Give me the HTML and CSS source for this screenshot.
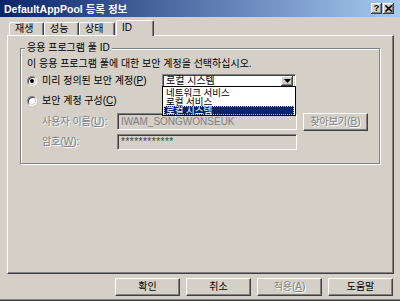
FILE: index.html
```html
<!DOCTYPE html>
<html lang="ko">
<head>
  <meta charset="UTF-8">
  <title>DefaultAppPool 등록 정보</title>
  <link rel="stylesheet" href="styles.css">
</head>
<body>
  <div class="window">
    <div class="titlebar">
      <span class="title">DefaultAppPool 등록 정보</span>
      <div class="title-buttons">
        <span class="tbtn help">?</span>
        <span class="tbtn">
          <svg width="8" height="7" viewBox="0 0 8 7"><path d="M0.5 0.5 L7 6.5 M7 0.5 L0.5 6.5" stroke="#000" stroke-width="1.6"/></svg>
        </span>
      </div>
    </div>

    <div class="tabs">
      <div class="tab">재생</div>
      <div class="tab">성능</div>
      <div class="tab wide">상태</div>
      <div class="tab active">ID</div>
    </div>

    <div class="panel">
      <div class="group">
        <span class="legend">응용 프로그램 풀 ID</span>
        <p class="hint">이 응용 프로그램 풀에 대한 보안 계정을 선택하십시오.</p>

        <div class="row row-first">
          <label class="radio-label">
            <span class="radio checked"></span>
            <span>미리 정의된 보안 계정(<u>P</u>)</span>
          </label>
          <div class="combo">
            <span>로컬 시스템</span>
            <span class="combo-arrow">
              <svg width="7" height="4" viewBox="0 0 7 4"><path d="M0 0 H7 L3.5 4 Z" fill="#000"/></svg>
            </span>
            <ul class="dropdown">
              <li>네트워크 서비스</li>
              <li>로컬 서비스</li>
              <li class="selected">로컬 시스템</li>
            </ul>
          </div>
        </div>

        <div class="row row-second">
          <label class="radio-label">
            <span class="radio"></span>
            <span>보안 계정 구성(<u>C</u>)</span>
          </label>
        </div>

        <div class="row field-row user-row">
          <span class="field-label disabled">사용자 이름(<u>U</u>):</span>
          <div class="textbox disabled-box">IWAM_SONGWONSEUK</div>
          <span class="btn browse disabled">찾아보기(<u>B</u>)</span>
        </div>

        <div class="row field-row pass-row">
          <span class="field-label disabled">암호(<u>W</u>):</span>
          <div class="textbox password">************</div>
        </div>
      </div>
    </div>

    <div class="buttons">
      <span class="btn">확인</span>
      <span class="btn">취소</span>
      <span class="btn disabled">적용(<u>A</u>)</span>
      <span class="btn">도움말</span>
    </div>
  </div>
</body>
</html>
```

FILE: styles.css
```css
* {
  box-sizing: border-box;
}
body {
  margin: 0;
  font-family: "Liberation Sans", "Noto Sans CJK KR", sans-serif;
  font-size: 10px;
  color: #000;
  background: #d4d0c8;
}
.window {
  width: 400px;
  height: 301px;
  background: #d4d0c8;
  border-bottom: 1px solid #404040;
  box-shadow: inset 0 -1px #808080;
  display: flex;
  flex-direction: column;
}
.titlebar {
  height: 17px;
  background: linear-gradient(to right, #0a246a, #a6caf0);
  display: flex;
  align-items: center;
  justify-content: space-between;
  padding: 0 6px 0 4px;
}
.title {
  color: #fff;
  font-weight: bold;
  font-size: 10.5px;
  line-height: 12px;
}
.title-buttons {
  display: flex;
  gap: 1px;
}
.tbtn {
  width: 11px;
  height: 11px;
  background: #d4d0c8;
  box-shadow: inset -1px -1px #404040, inset 1px 1px #fff, inset -2px -2px #808080;
  display: flex;
  align-items: center;
  justify-content: center;
}
.tbtn.help {
  font-weight: bold;
  font-size: 9px;
  line-height: 9px;
}
.tabs {
  margin-top: 3px;
  height: 15px;
  padding-left: 9px;
  display: flex;
  align-items: flex-end;
}
.tab {
  width: 35px;
  height: 13px;
  padding-left: 5px;
  line-height: 11px;
  border: 1px solid;
  border-color: #fff #404040 transparent #fff;
  border-bottom: none;
  border-radius: 2px 2px 0 0;
  box-shadow: inset -1px 0 #808080;
  background: #d4d0c8;
}
.tab.wide {
  width: 36px;
}
.tab.active {
  width: 38px;
  height: 16px;
  margin-left: 1px;
  margin-bottom: -1px;
  line-height: 13px;
  position: relative;
  z-index: 1;
}
.panel {
  margin-left: 7px;
  width: 387px;
  height: 239px;
  border: 1px solid;
  border-color: #fff #404040 #404040 #fff;
  box-shadow: inset -1px -1px #808080;
  padding: 12px 0 0 12px;
}
.group {
  width: 360px;
  height: 116px;
  border: 1px solid #808080;
  box-shadow: inset 1px 1px #fff, 1px 1px #fff;
  padding-left: 6px;
  display: flex;
  flex-direction: column;
}
.legend {
  align-self: flex-start;
  margin-top: -7px;
  margin-left: -2px;
  padding: 0 2px;
  height: 12px;
  line-height: 12px;
  background: #d4d0c8;
}
.hint {
  margin: 4px 0 0;
  line-height: 12px;
}
.row {
  display: flex;
  align-items: center;
}
.row-first {
  margin-top: 4px;
  height: 14px;
}
.row-second {
  margin-top: 6px;
  height: 14px;
}
.radio-label {
  display: flex;
  align-items: center;
  gap: 5px;
  width: 135px;
  line-height: 12px;
}
.radio {
  width: 10px;
  height: 10px;
  border-radius: 50%;
  background: #fff;
  border: 1px solid;
  border-color: #808080 #fff #fff #808080;
  box-shadow: inset 1px 1px #404040, inset -1px -1px #d4d0c8;
  display: flex;
  align-items: center;
  justify-content: center;
}
.radio.checked::after {
  content: "";
  width: 4px;
  height: 4px;
  border-radius: 50%;
  background: #000;
}
.combo {
  position: relative;
  width: 134px;
  height: 14px;
  background: #fff;
  border: 1px solid;
  border-color: #808080 #fff #fff #808080;
  box-shadow: inset 1px 1px #404040, inset -1px -1px #d4d0c8;
  display: flex;
  align-items: center;
  padding-left: 3px;
  line-height: 12px;
}
.combo-arrow {
  margin-left: auto;
  margin-right: 2px;
  width: 12px;
  height: 10px;
  background: #d4d0c8;
  box-shadow: inset -1px -1px #404040, inset 1px 1px #fff, inset -2px -2px #808080;
  display: flex;
  align-items: center;
  justify-content: center;
}
.dropdown {
  position: absolute;
  top: 11px;
  left: -1px;
  width: 134px;
  height: 30px;
  margin: 0;
  padding: 1px 1px 0;
  list-style: none;
  background: #fff;
  border: 1px solid #000;
  font-size: 9.5px;
}
.dropdown li {
  height: 9px;
  line-height: 9px;
  padding-left: 2px;
}
.dropdown li.selected {
  background: #0a246a;
  color: #fff;
  outline: 1px dotted #c0c0c0;
  outline-offset: -1px;
}
.field-row {
  padding-left: 15px;
}
.user-row {
  margin-top: 5px;
  height: 17px;
}
.pass-row {
  margin-top: 4px;
  height: 16px;
}
.field-label {
  width: 75px;
  line-height: 12px;
}
.textbox {
  width: 180px;
  height: 100%;
  background: #d4d0c8;
  border: 1px solid;
  border-color: #808080 #fff #fff #808080;
  box-shadow: inset 1px 1px #404040, inset -1px -1px #d4d0c8;
  padding-left: 3px;
  display: flex;
  align-items: center;
  line-height: 12px;
}
.disabled-box {
  color: #808080;
}
.password {
  color: #404040;
  letter-spacing: 0.5px;
}
.disabled {
  color: #808080;
  text-shadow: 1px 1px #fff;
}
.btn {
  width: 65px;
  height: 18px;
  background: #d4d0c8;
  border: 1px solid;
  border-color: #fff #404040 #404040 #fff;
  box-shadow: inset -1px -1px #808080;
  display: flex;
  align-items: center;
  justify-content: center;
  line-height: 12px;
}
.browse {
  margin-left: 6px;
  height: 18px;
}
.buttons {
  margin-top: 4px;
  display: flex;
  justify-content: flex-end;
  gap: 6px;
  padding-right: 7px;
}
```
